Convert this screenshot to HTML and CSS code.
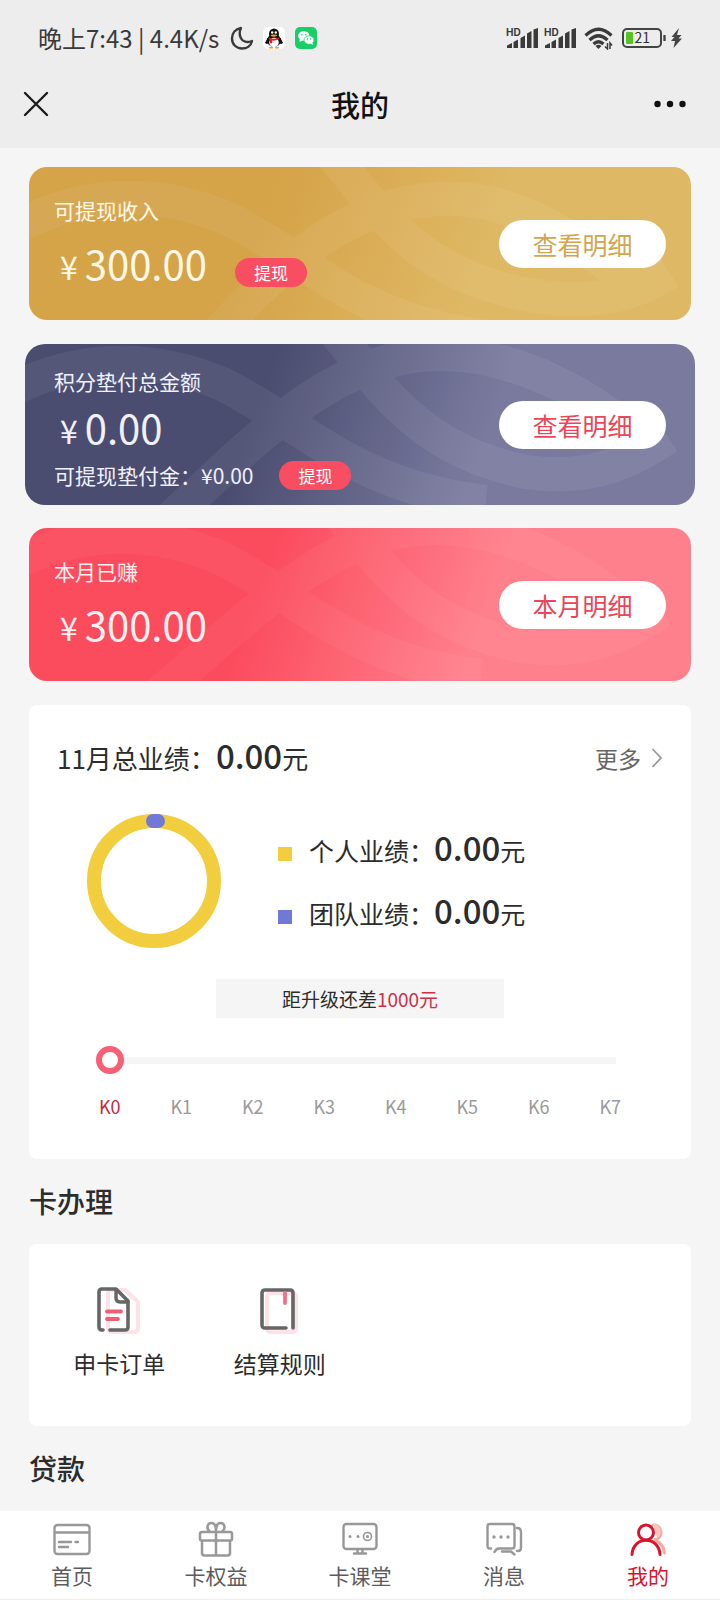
FILE: index.html
```html
<!DOCTYPE html>
<html lang="zh-CN">
<head>
<meta charset="utf-8">
<meta name="viewport" content="width=device-width, initial-scale=1">
<title>我的</title>
<link rel="stylesheet" href="styles.css">
</head>
<body>
<svg class="defs" aria-hidden="true">
  <symbol id="signal" viewBox="0 0 32 22">
    <text class="hd" x="0" y="9">HD</text>
    <path d="M1 21v-2.500l5-2.500V21zM7.500 21v-6l4.500-2.500V21zM14.500 21V11L19 8.500V21zM21 21V6.500L25.500 4V21zM27.500 21V2.500L32 1v20z" fill="#3a3a3a"/>
  </symbol>
</svg>
<div class="page">
  <header class="top">
    <div class="status">
      <span>晚上7:43 | 4.4K/s</span>
      <svg class="moon" width="24" height="24" viewBox="0 0 24 24" fill="none" stroke="#3a3a3a" stroke-width="2.400" stroke-linejoin="round"><path d="M11 2C5.500 3 2 7 2 12.500 2 18.500 6.500 22.500 12 22.500c5 0 9-3 10-7.500-5 2.200-9.500.5-11.200-3C9.200 8.700 9.500 5 11 2z"/></svg>
      <svg class="qq" width="22" height="22" viewBox="0 0 22 22"><rect width="22" height="22" rx="5" fill="#fff"/><ellipse cx="11" cy="13.500" rx="7" ry="6.500" fill="#111"/><path d="M5 11l-2.500 5 2 .5zM17 11l2.500 5-2 .5z" fill="#111" stroke="#111"/><ellipse cx="11" cy="7" rx="5" ry="5.500" fill="#111"/><ellipse cx="11" cy="15.500" rx="4.800" ry="4.700" fill="#fff"/><circle cx="9.200" cy="5.500" r="1.200" fill="#fff"/><circle cx="12.800" cy="5.500" r="1.200" fill="#fff"/><ellipse cx="11" cy="8.600" rx="3.200" ry="1.100" fill="#f5a800"/><path d="M5.800 10.500q5.200 2.500 10.400 0v1.800q-4 1.700-7 1.300v2.600H7v-3.200l-1.200-.7z" fill="#e2202c"/><path d="M6.500 20.700h3M12.500 20.700h3" stroke="#f5a800" stroke-width="1.400" stroke-linecap="round"/></svg>
      <svg class="wechat" width="22" height="22" viewBox="0 0 22 22"><rect width="22" height="22" rx="5" fill="#18ce66"/><ellipse cx="8.800" cy="9" rx="5.600" ry="4.800" fill="#fff"/><path d="M5 12l-.6 3 3-1.600z" fill="#fff"/><ellipse cx="14" cy="13" rx="5" ry="4.200" fill="#fff" stroke="#18ce66" stroke-width=".7"/><path d="M15.500 16.500l2.300 1.400-.3-2.400z" fill="#fff"/><circle cx="7" cy="7.800" r=".8" fill="#18ce66"/><circle cx="10.700" cy="7.800" r=".8" fill="#18ce66"/><circle cx="12.400" cy="12" r=".7" fill="#18ce66"/><circle cx="15.600" cy="12" r=".7" fill="#18ce66"/></svg>
      <span class="spacer"></span>
      <svg class="bars" width="32" height="22"><use href="#signal"/></svg>
      <svg class="bars" width="32" height="22"><use href="#signal"/></svg>
      <svg class="wifi" width="30" height="23" viewBox="0 0 30 23" fill="none" stroke="#3a3a3a" stroke-width="3.200"><path d="M1.500 8.500q13-12.500 26 0M5.500 13q9-8.500 18 0M9.500 17q5-4.500 10 0"/><path d="M11.500 19q3-2.500 6 0l-3 3z" fill="#3a3a3a" stroke="none"/><path d="M23.500 16v6L21 19.500M26 22v-6l2 2.500" stroke-width="1.500"/></svg>
      <svg class="battery" width="45" height="20" viewBox="0 0 45 20"><rect x="1" y="1" width="38" height="18" rx="4" fill="none" stroke="#444" stroke-width="2"/><rect x="4" y="4" width="7" height="12" rx="1" fill="#57c322"/><path d="M42.500 7v6" stroke="#444" stroke-width="2.400"/><text class="charge" x="12.500" y="15">21</text></svg>
      <svg width="11" height="20" viewBox="0 0 11 20"><path d="M8 0L.5 9h3L0 13h4l-1.500 7L11 10.500H7.500L10.500 7H6z" fill="#444"/></svg>
    </div>
    <div class="titlebar">
      <button class="icon-btn" type="button" aria-label="关闭"><svg width="26" height="26" viewBox="0 0 26 26" stroke="#1c1c1c" stroke-width="2.400" stroke-linecap="round"><path d="M2 2l22 22M24 2L2 24"/></svg></button>
      <h1>我的</h1>
      <button class="icon-btn menu" type="button" aria-label="更多"><svg width="34" height="8" viewBox="0 0 34 8" fill="#111"><circle cx="4.500" cy="4" r="3.200"/><circle cx="17" cy="4" r="3.200"/><circle cx="29.500" cy="4" r="3.200"/></svg></button>
    </div>
  </header>

  <main class="content">
    <section class="wallet gold">
      <svg class="waves" viewBox="0 0 662 153" preserveAspectRatio="none"><path d="M-30 70C50 20 130 22 200 52C280 92 330 155 460 170"/><path d="M185 170C235 115 310 35 410 32C480 28 540 65 600 115"/><path d="M300 -15C350 40 380 105 500 128C570 140 610 125 640 105"/></svg>
      <div class="info">
        <p class="label">可提现收入</p>
        <div class="amount"><span class="yen">¥</span><strong>300.00</strong><button class="cash" type="button">提现</button></div>
      </div>
      <button class="detail" type="button">查看明细</button>
    </section>

    <section class="wallet indigo">
      <svg class="waves" viewBox="5 12 662 161" preserveAspectRatio="none"><path d="M-30 70C50 20 130 22 200 52C280 92 330 155 460 170"/><path d="M145 190C235 105 310 25 410 22C490 20 570 65 620 115"/><path d="M290 -25C350 40 380 115 500 140C570 150 610 125 640 105"/></svg>
      <div class="info">
        <p class="label">积分垫付总金额</p>
        <div class="amount"><span class="yen">¥</span><strong>0.00</strong></div>
        <div class="advance"><span>可提现垫付金：¥0.00</span><button class="cash" type="button">提现</button></div>
      </div>
      <button class="detail" type="button">查看明细</button>
    </section>

    <section class="wallet rose">
      <svg class="waves" viewBox="8 22 662 153" preserveAspectRatio="none"><path d="M-30 70C50 20 130 22 200 52C280 92 330 155 460 170"/><path d="M135 190C235 105 310 25 410 22C490 20 570 65 620 115"/><path d="M290 -25C350 40 380 115 500 140C570 150 610 125 640 105"/></svg>
      <div class="info">
        <p class="label">本月已赚</p>
        <div class="amount"><span class="yen">¥</span><strong>300.00</strong></div>
      </div>
      <button class="detail" type="button">本月明细</button>
    </section>

    <section class="panel stats">
      <div class="stats-head">
        <p class="figure">11月总业绩：<b>0.00</b>元</p>
        <a class="more" href="#more">更多<svg width="12" height="20" viewBox="0 0 12 20" fill="none" stroke="#999" stroke-width="1.800"><path d="M1.500 1l8.500 9-8.500 9"/></svg></a>
      </div>
      <div class="chart">
        <svg width="134" height="134" viewBox="0 0 134 134" role="img" aria-label="业绩占比"><circle cx="67" cy="67" r="60" fill="none" stroke="#f2ce3e" stroke-width="14"/><rect x="59" y="0" width="19" height="14" rx="7" fill="#7179d6"/></svg>
        <ul class="legend">
          <li><i class="swatch own"></i><p class="figure">个人业绩：<b>0.00</b>元</p></li>
          <li><i class="swatch team"></i><p class="figure">团队业绩：<b>0.00</b>元</p></li>
        </ul>
      </div>
      <p class="notice">距升级还差<em>1000元</em></p>
      <input class="level" type="range" min="0" max="7" value="0" aria-label="等级">
      <ol class="ticks"><li class="on">K0</li><li>K1</li><li>K2</li><li>K3</li><li>K4</li><li>K5</li><li>K6</li><li>K7</li></ol>
    </section>

    <h2>卡办理</h2>
    <section class="panel shortcuts">
      <a href="#orders">
        <svg width="46" height="50" viewBox="0 0 46 50" fill="none" stroke-linecap="round" stroke-linejoin="round"><path d="M12 8q0-4 4-4h13l13 12v26q0 4-4 4H16q-4 0-4-4z" stroke="#fde3e7" stroke-width="4"/><path d="M7 44H6q-3 0-3-3V6q0-3 3-3h14l12 12v26q0 3-3 3H14" stroke="#666" stroke-width="3.600"/><path d="M20 4v8q0 4 4 4h8" stroke="#666" stroke-width="3.400"/><path d="M11 25.500h14M11 33h11" stroke="#ec5f76" stroke-width="3.800"/></svg>
        <span>申卡订单</span>
      </a>
      <a href="#rules">
        <svg width="40" height="50" viewBox="0 0 40 50" fill="none" stroke-linecap="round" stroke-linejoin="round"><rect x="7" y="7" width="29" height="39" rx="3" stroke="#fde3e7" stroke-width="4"/><path d="M26 42H5q-3 0-3-3V7q0-3 3-3h25q3 0 3 3v35" stroke="#666" stroke-width="3.600"/><path d="M25 7v10" stroke="#f07087" stroke-width="3.800"/></svg>
        <span>结算规则</span>
      </a>
    </section>

    <h2>贷款</h2>
  </main>

  <nav class="tabs">
    <a href="#home">
      <svg width="38" height="34" viewBox="0 0 38 34" fill="none" stroke="#989898" stroke-width="2.400" stroke-linecap="round"><rect x="1.500" y="2" width="35" height="29" rx="3"/><path d="M2 9.500h34M6 19h12M22.500 19h2.500M6 24h9"/></svg>
      <span>首页</span>
    </a>
    <a href="#benefits">
      <svg width="38" height="34" viewBox="0 0 38 34" fill="none" stroke="#989898" stroke-width="2.500" stroke-linejoin="round"><rect x="3" y="9" width="32" height="8.500" rx="2"/><path d="M5 17.500V30q0 2.500 2.500 2.500h23Q33 32.500 33 30V17.500M19 9v23M13 8.500C9 6 10 0 14.500 0 18 0 19 3 19 8c0-5 1-8 4.500-8C28 0 29 6 25 8.500"/></svg>
      <span>卡权益</span>
    </a>
    <a href="#class">
      <svg width="38" height="34" viewBox="0 0 38 34" fill="none" stroke="#989898" stroke-width="2.400" stroke-linecap="round"><rect x="2.500" y="1" width="33" height="25" rx="3"/><path d="M16.500 27v3M21.500 27v3M13 30.500h12"/><circle cx="26.500" cy="13.500" r="4" stroke-width="1.600"/><g fill="#989898" stroke="none"><circle cx="9" cy="13.500" r="1.500"/><circle cx="17" cy="13.500" r="1.500"/><circle cx="26.500" cy="13.500" r="1.500"/></g></svg>
      <span>卡课堂</span>
    </a>
    <a href="#messages">
      <svg width="38" height="34" viewBox="0 0 38 34" fill="none" stroke="#989898" stroke-width="2.400" stroke-linecap="round" stroke-linejoin="round"><path d="M6 25.500H5q-2.500 0-2.500-2.500V3.500Q2.500 1 5 1h22q2.500 0 2.500 2.500V23q0 2.500-2.500 2.500H14q-3 0-4.500 3.500"/><path d="M32 5q4 0 4 4v16q0 3-3 3h-1M17 28.500h9l3.500 3"/><g fill="#989898" stroke="none"><circle cx="9" cy="14" r="1.700"/><circle cx="16" cy="14" r="1.700"/><circle cx="23" cy="14" r="1.700"/></g></svg>
      <span>消息</span>
    </a>
    <a class="current" href="#me" aria-current="page">
      <svg width="38" height="34" viewBox="0 0 38 34" fill="none" stroke-linecap="round"><g stroke="#f6aaa4" stroke-width="3"><path d="M24 2c10-1 11 14 1 15 6 2 10 7 10.500 13"/></g><path d="M24 1c8-1 10 10 4 14z" fill="#fbc7bd"/><g stroke="#d9132c" stroke-width="3"><circle cx="17" cy="9.500" r="7.500" fill="#fff"/><path d="M3 31.500c1-19 27-19 28 0"/></g></svg>
      <span>我的</span>
    </a>
  </nav>
</div>
</body>
</html>
```
FILE: styles.css
```css
* {
  box-sizing: border-box;
  margin: 0;
  padding: 0;
}

body {
  background: #f5f5f5;
  color: #2c2c2c;
  font-family: "Noto Sans CJK SC", sans-serif;
}

button {
  border: 0;
  background: none;
  font: inherit;
}

a {
  color: inherit;
  text-decoration: none;
}

ul,
ol {
  list-style: none;
}

svg {
  flex: none;
}

.defs {
  display: none;
}

.page {
  display: flex;
  flex-direction: column;
  height: 100vh;
}

/* Status bar and title */
.top {
  flex: none;
  padding-bottom: 16px;
  background: #ededed;
}

.status {
  display: flex;
  align-items: center;
  height: 76px;
  padding: 0 38px;
  color: #3a3a3a;
  font-size: 24px;
  line-height: 36px;
}

.moon {
  margin-left: 11px;
}

.qq {
  margin-left: 9px;
}

.wechat {
  margin-left: 10px;
}

.spacer {
  flex: 1;
}

.bars {
  margin-right: 6px;
}

.hd {
  fill: #3a3a3a;
  font: bold 10px Inter, sans-serif;
}

.wifi {
  margin: 0 8px 0 2px;
}

.battery {
  margin-right: 4px;
}

.charge {
  fill: #333;
  font-size: 14px;
}

.titlebar {
  display: grid;
  grid-template-columns: 1fr auto 1fr;
  align-items: center;
  height: 56px;
  padding: 0 23px;
}

.icon-btn {
  display: flex;
  align-items: center;
  width: 34px;
  height: 40px;
}

.menu {
  justify-self: end;
  margin-right: 10px;
}

h1 {
  color: #111;
  font-size: 29px;
  font-weight: 500;
  line-height: 40px;
}

/* Wallet cards */
.content {
  flex: 1;
  min-height: 0;
  overflow: hidden;
  padding: 19px 29px 0;
}

.wallet {
  position: relative;
  display: flex;
  align-items: center;
  justify-content: space-between;
  overflow: hidden;
  padding-right: 25px;
  padding-left: 25px;
  border-radius: 18px;
}

.gold {
  min-height: 153px;
  background: linear-gradient(110deg, #d5a349 35%, #dfb864 68%);
  color: #fff8e6;
}

.indigo {
  min-height: 161px;
  margin: 24px -4px 23px;
  padding-right: 29px;
  padding-left: 29px;
  border-radius: 20px;
  background: linear-gradient(110deg, #4b4d70 35%, #7a7b9f 68%);
  color: #f0f1ff;
}

.rose {
  min-height: 153px;
  background: linear-gradient(110deg, #fb4d5e 35%, #ff808d 68%);
  color: #ffeff0;
}

.waves {
  position: absolute;
  inset: 0;
  width: 100%;
  height: 100%;
  fill: none;
  stroke: #fff;
  stroke-width: 34px;
  opacity: 0.06;
}

.rose .waves {
  opacity: 0.04;
}

.info,
.detail {
  position: relative;
}

.info {
  padding-bottom: 5px;
}

.indigo .info {
  padding: 8px 0 0;
}

.label {
  font-size: 21px;
  line-height: 30px;
}

.amount {
  display: flex;
  align-items: baseline;
  margin-top: 14px;
  padding-left: 6px;
  font-size: 40px;
  line-height: 48px;
}

.indigo .amount {
  margin-top: 7px;
}

.yen {
  margin-right: 7px;
  font-size: 32px;
  line-height: 32px;
}

.amount strong {
  font-weight: 400;
}

.cash {
  width: 72px;
  border-radius: 15px;
  background: #f94e61;
  color: #fff;
  font-size: 17px;
  line-height: 29px;
}

.amount .cash {
  align-self: flex-end;
  margin-left: 28px;
}

.advance {
  display: flex;
  align-items: center;
  gap: 26px;
  margin-top: 8px;
  font-size: 21px;
  line-height: 32px;
}

.detail {
  width: 167px;
  border-radius: 24px;
  background: #fff;
  color: #ea4659;
  font-size: 25px;
  line-height: 48px;
}

.gold .detail {
  color: #d2a54f;
}

/* Performance panel */
.panel {
  border-radius: 8px;
  background: #fff;
}

.stats {
  margin-top: 24px;
  padding: 33px 28px 41px;
}

.stats-head {
  display: flex;
  align-items: center;
  justify-content: space-between;
  height: 40px;
}

.figure {
  font-size: 25px;
  line-height: 40px;
}

.stats-head .figure {
  font-size: 26px;
}

.figure b {
  font-size: 33px;
  font-weight: 500;
  line-height: 32px;
}

.more {
  display: flex;
  align-items: center;
  gap: 10px;
  color: #666;
  font-size: 23px;
  line-height: 32px;
}

.chart {
  display: flex;
  align-items: center;
  gap: 57px;
  margin: 36px 0 31px 30px;
}

.legend {
  display: grid;
  gap: 23px;
}

.legend li {
  display: flex;
  align-items: baseline;
  gap: 17px;
  height: 40px;
}

.swatch {
  width: 14px;
  height: 14px;
}

.own {
  background: #f2ce3e;
}

.team {
  background: #7179d6;
}

.notice {
  width: 288px;
  margin: 0 auto 28px;
  background: #f5f5f5;
  font-size: 19px;
  line-height: 39px;
  text-align: center;
}

.notice em {
  color: #cd3048;
  font-style: normal;
}

.level {
  display: block;
  width: calc(100% - 86px);
  height: 28px;
  margin: 0 48px 20px 39px;
  appearance: none;
  background: linear-gradient(#f5f5f5, #f5f5f5) center / 100% 7px no-repeat;
}

.level::-webkit-slider-thumb {
  width: 28px;
  height: 28px;
  border: 6px solid #f66074;
  border-radius: 50%;
  appearance: none;
  background: #fff;
}

.ticks {
  display: grid;
  grid-template-columns: repeat(8, 1fr);
  margin: 0 17px;
  color: #999;
  font-size: 18px;
  line-height: 24px;
  text-align: center;
}

.ticks .on {
  color: #c42a40;
}

/* Shortcuts */
h2 {
  font-size: 28px;
  font-weight: 500;
  line-height: 85px;
}

.shortcuts {
  display: grid;
  grid-template-columns: repeat(4, 1fr);
  min-height: 182px;
  padding: 42px 10px;
}

.shortcuts a {
  display: flex;
  flex-direction: column;
  align-items: center;
  gap: 10px;
  font-size: 23px;
  line-height: 34px;
}

/* Bottom tabs */
.tabs {
  display: grid;
  flex: none;
  grid-template-columns: repeat(5, 1fr);
  height: 89px;
  padding-top: 12px;
  border-bottom: 1px solid #eee;
  background: #fff;
}

.tabs a {
  display: flex;
  flex-direction: column;
  align-items: center;
  gap: 4px;
  color: #5c5c5c;
  font-size: 21px;
  line-height: 28px;
}

.tabs svg {
  overflow: visible;
}

.tabs .current {
  color: #d9132c;
}
```
